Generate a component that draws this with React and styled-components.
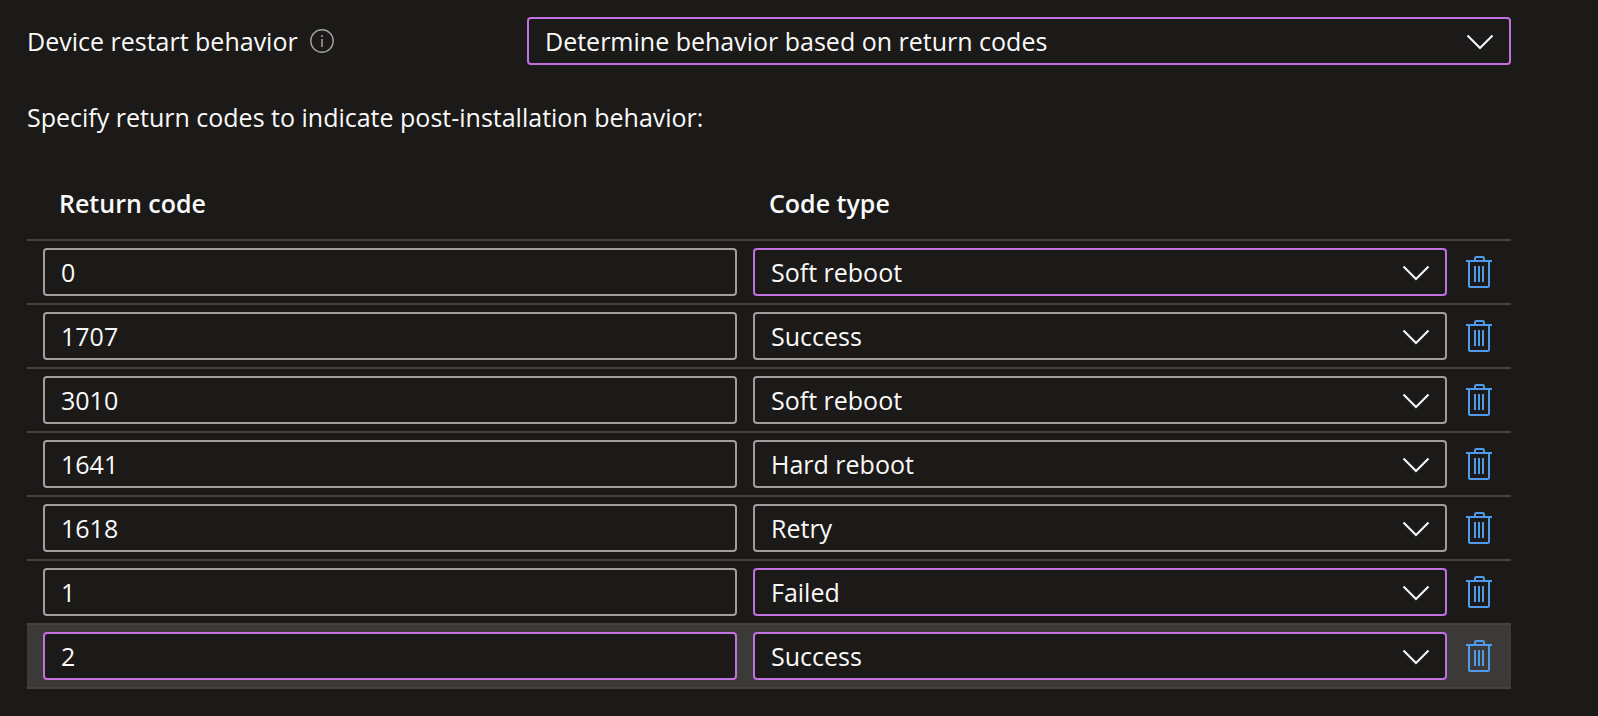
import React from "react";
import styled, { createGlobalStyle } from "styled-components";

const GlobalStyle = createGlobalStyle`
  *, *::before, *::after { box-sizing: border-box; }
  body {
    margin: 0;
    background: #1b1a19;
    color: #faf9f8;
    font: 400 25px/34px "Open Sans", "Noto Sans", sans-serif;
  }
`;

const Page = styled.main`
  padding: 17px 87px 27px 27px;
`;

const Field = styled.div`
  display: grid;
  grid-template-columns: 500px 1fr;
  align-items: center;
`;

const FieldLabel = styled.div`
  display: flex;
  align-items: center;
  gap: 12px;
`;

const InfoButton = styled.button`
  display: flex;
  padding: 0;
  border: 0;
  background: none;
  color: #a19f9d;
  cursor: pointer;
`;

const Hint = styled.p`
  margin: 35px 0 37px;
`;

const controlBorder = ({ $edited }) => ($edited ? "#c371e0" : "#a19f9d");

const SelectBox = styled.div`
  position: relative;
`;

const Select = styled.select`
  display: block;
  width: 100%;
  height: 48px;
  padding: 0 56px 0 16px;
  appearance: none;
  border: 2px solid ${controlBorder};
  border-radius: 4px;
  background: #1b1a19;
  color: inherit;
  font: inherit;
  outline: none;
`;

const Chevron = styled.svg`
  position: absolute;
  top: 17px;
  right: 17px;
  pointer-events: none;
`;

const TextInput = styled.input`
  display: block;
  width: 100%;
  height: 48px;
  padding: 0 16px;
  border: 2px solid ${controlBorder};
  border-radius: 4px;
  background: #1b1a19;
  color: inherit;
  font: inherit;
  outline: none;
`;

const CodesTable = styled.table`
  width: 100%;
  table-layout: fixed;
  border-spacing: 0;
`;

const HeaderCell = styled.th`
  height: 68px;
  padding: 0 0 4px 32px;
  text-align: left;
  font-weight: 600;
`;

const ActionHeader = styled.th`
  width: 64px;
  padding: 0;
`;

const Row = styled.tr`
  background: ${({ $active }) => ($active ? "#3b3a39" : "transparent")};

  &:last-child > td { border-bottom: 2px solid #444342; }
`;

const Cell = styled.td`
  padding: 7px 0 7px 16px;
  border-top: 2px solid #444342;
`;

const ActionCell = styled(Cell)`
  padding: 0 19px;
`;

const DeleteButton = styled.button`
  display: flex;
  padding: 0;
  border: 0;
  background: none;
  color: #4f9bea;
  cursor: pointer;
`;

const codeTypes = ["Success", "Soft reboot", "Hard reboot", "Retry", "Failed"];

const restartBehaviors = [
  "Determine behavior based on return codes",
  "No specific action",
  "App install may force a device restart",
  "Intune will force a mandatory device restart",
];

const returnCodes = [
  { code: "0", type: "Soft reboot", typeEdited: true },
  { code: "1707", type: "Success" },
  { code: "3010", type: "Soft reboot" },
  { code: "1641", type: "Hard reboot" },
  { code: "1618", type: "Retry" },
  { code: "1", type: "Failed", typeEdited: true },
  { code: "2", type: "Success", typeEdited: true, codeEdited: true, active: true },
];

function InfoIcon() {
  return (
    <svg width="24" height="24" viewBox="0 0 24 24" fill="none" stroke="currentColor" aria-hidden="true">
      <circle cx="12" cy="12" r="11.2" strokeWidth="1.4" />
      <path d="M12 10v8M12 6v2" strokeWidth="1.6" />
    </svg>
  );
}

function TrashIcon() {
  return (
    <svg width="26" height="32" viewBox="0 0 26 32" fill="none" stroke="currentColor" strokeWidth="2" aria-hidden="true">
      <path d="M0 5H26M9 5V2.2Q9 1 10.2 1H16.8Q18 1 18 2.2V5M3 5V29.5Q3 31 4.5 31H21.5Q23 31 23 29.5V5" />
      <path d="M9 10V26M13 10V26M17 10V26" />
    </svg>
  );
}

function Dropdown({ options, edited, ...rest }) {
  return (
    <SelectBox>
      <Select $edited={edited} {...rest}>
        {options.map((option) => (
          <option key={option}>{option}</option>
        ))}
      </Select>
      <Chevron width="28" height="16" viewBox="0 0 28 16" fill="none" stroke="currentColor" strokeWidth="2" aria-hidden="true">
        <path d="M1.5 1.5L14 14L26.5 1.5" />
      </Chevron>
    </SelectBox>
  );
}

export default function App() {
  return (
    <>
      <GlobalStyle />
      <Page>
        <Field>
          <FieldLabel>
            <label htmlFor="restart">Device restart behavior</label>
            <InfoButton type="button" aria-label="About device restart behavior">
              <InfoIcon />
            </InfoButton>
          </FieldLabel>
          <Dropdown id="restart" options={restartBehaviors} edited />
        </Field>
        <Hint>Specify return codes to indicate post-installation behavior:</Hint>
        <CodesTable>
          <thead>
            <tr>
              <HeaderCell scope="col">Return code</HeaderCell>
              <HeaderCell scope="col">Code type</HeaderCell>
              <ActionHeader aria-label="Actions" />
            </tr>
          </thead>
          <tbody>
            {returnCodes.map(({ code, type, codeEdited, typeEdited, active }) => (
              <Row key={code} $active={active}>
                <Cell>
                  <TextInput aria-label="Return code" defaultValue={code} $edited={codeEdited} />
                </Cell>
                <Cell>
                  <Dropdown aria-label={`Code type for ${code}`} options={codeTypes} defaultValue={type} edited={typeEdited} />
                </Cell>
                <ActionCell>
                  <DeleteButton type="button" aria-label={`Delete return code ${code}`}>
                    <TrashIcon />
                  </DeleteButton>
                </ActionCell>
              </Row>
            ))}
          </tbody>
        </CodesTable>
      </Page>
    </>
  );
}
